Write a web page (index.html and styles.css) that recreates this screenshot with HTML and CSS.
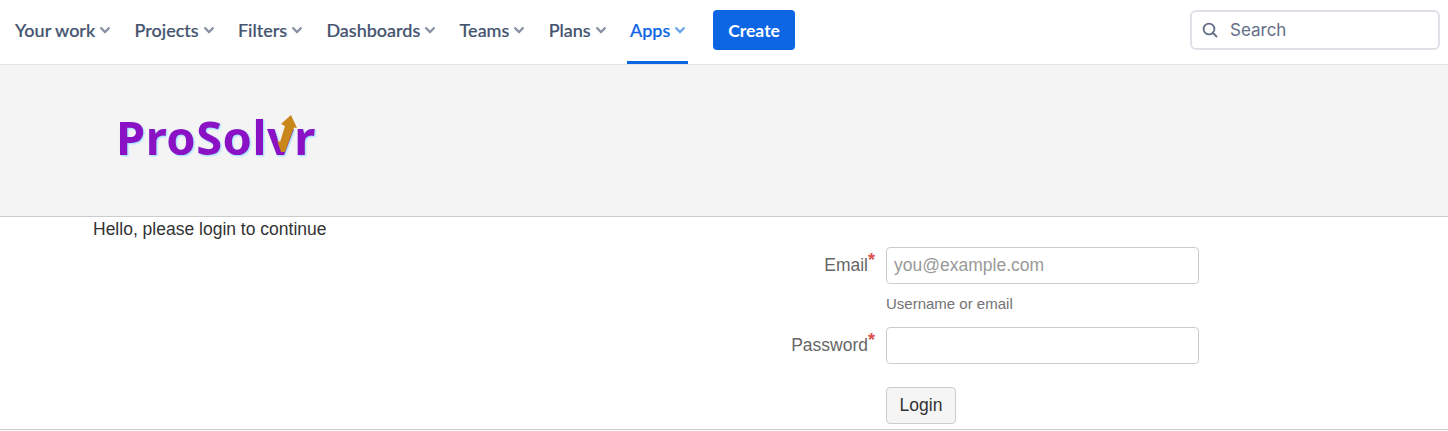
FILE: index.html
```html
<!DOCTYPE html>
<html lang="en">
<head>
    <meta charset="UTF-8">
    <title>Login</title>
    <link rel="stylesheet" href="styles.css">
</head>
<body>
<nav class="topnav">
    <a class="nav-item">Your work<svg class="chev" viewBox="0 0 14 10"><path d="M2.5 2.5 7 7l4.5-4.5"/></svg></a>
    <a class="nav-item">Projects<svg class="chev" viewBox="0 0 14 10"><path d="M2.5 2.5 7 7l4.5-4.5"/></svg></a>
    <a class="nav-item">Filters<svg class="chev" viewBox="0 0 14 10"><path d="M2.5 2.5 7 7l4.5-4.5"/></svg></a>
    <a class="nav-item">Dashboards<svg class="chev" viewBox="0 0 14 10"><path d="M2.5 2.5 7 7l4.5-4.5"/></svg></a>
    <a class="nav-item">Teams<svg class="chev" viewBox="0 0 14 10"><path d="M2.5 2.5 7 7l4.5-4.5"/></svg></a>
    <a class="nav-item">Plans<svg class="chev" viewBox="0 0 14 10"><path d="M2.5 2.5 7 7l4.5-4.5"/></svg></a>
    <a class="nav-item active">Apps<svg class="chev" viewBox="0 0 14 10"><path d="M2.5 2.5 7 7l4.5-4.5"/></svg></a>
    <button class="create">Create</button>
    <div class="search">
        <svg class="search-icon" viewBox="0 0 16 16"><circle cx="7" cy="7" r="5.4"/><path d="M11 11l4 4"/></svg>
        <span>Search</span>
    </div>
</nav>
<header class="banner">
    <div class="logo">
        <span class="logo-text">ProSolvr</span>
        <svg class="logo-arrow" viewBox="0 0 21 40"><path d="M4 10 14 1l6 13-3-.5L8 38H4L0 26l3 2 5-16z"/></svg>
    </div>
</header>
<main class="content">
    <p class="hello">Hello, please login to continue</p>
    <form class="login">
        <label class="field-label">Email<sup>*</sup></label>
        <input class="field" type="text" placeholder="you@example.com">
        <div class="hint">Username or email</div>
        <label class="field-label">Password<sup>*</sup></label>
        <input class="field" type="password">
        <button class="login-btn" type="button">Login</button>
    </form>
</main>
</body>
</html>
```

FILE: styles.css
```css
*{
    box-sizing: border-box;
}
body{
    margin: 0;
    background: #fff;
    font-family: "Liberation Sans", Arial, sans-serif;
}
.topnav{
    height: 65px;
    display: flex;
    align-items: center;
    padding: 0 8px 0 12px;
    border-bottom: 1px solid #dfe1e6;
    font-family: "Lato", sans-serif;
}
.nav-item{
    height: 64px;
    display: flex;
    align-items: center;
    padding: 0 1px 4px 3px;
    margin-right: 18.3px;
    color: #44546f;
    font-size: 18px;
    font-weight: 500;
    -webkit-text-stroke: .2px #44546f;
    position: relative;
}
.chev{
    width: 14px;
    height: 10px;
    margin-left: 3px;
    fill: none;
    stroke: #8993a5;
    stroke-width: 2.4;
}
.nav-item.active{
    color: #0c66e4;
    -webkit-text-stroke: .2px #0c66e4;
}
.nav-item.active .chev{
    stroke: #6ea4ec;
}
.nav-item.active::after{
    content: "";
    position: absolute;
    left: 0;
    right: 0;
    bottom: 0;
    height: 3px;
    background: #0c66e4;
}
.create{
    width: 82px;
    height: 40px;
    margin: 0 0 4px 6.5px;
    border: 0;
    border-radius: 4px;
    background: #0c66e4;
    color: #fff;
    font: 700 17.5px "Lato", sans-serif;
}
.search{
    width: 250px;
    height: 40px;
    margin: 0 0 4px auto;
    display: flex;
    align-items: center;
    gap: 12px;
    padding-left: 10px;
    border: 2px solid #dfe1e6;
    border-radius: 6px;
    color: #626f86;
    font: 17px "Inter", sans-serif;
}
.search-icon{
    width: 16px;
    height: 16px;
    fill: none;
    stroke: #626f86;
    stroke-width: 1.8;
}
.banner{
    height: 152px;
    padding: 42px 0 0 116px;
    background: #f4f4f4;
    border-bottom: 1px solid #ccc;
}
.logo{
    width: 202px;
    position: relative;
}
.logo-text{
    display: block;
    color: #8a12c4;
    font: 700 47px/60px "Noto Sans", sans-serif;
    letter-spacing: .5px;
    text-shadow: 1px 1px 2px #8fd8ff;
    filter: blur(.5px);
}
.logo-arrow{
    position: absolute;
    left: 161px;
    top: 7px;
    width: 21px;
    height: 40px;
    fill: #c9861b;
}
.content{
    height: 213px;
    border-bottom: 1px solid #ccc;
    padding: 0 93px;
}
.hello{
    margin: 0;
    padding-top: 1px;
    color: #333;
    font-size: 17.5px;
    line-height: 23px;
}
.login{
    width: 400px;
    margin: 6px 0 0 706px;
    display: grid;
    grid-template-columns: 76px 313px;
    column-gap: 11px;
    align-items: center;
}
.field-label{
    color: #666;
    font-size: 17.5px;
    text-align: right;
    white-space: nowrap;
    justify-self: end;
}
.field-label sup{
    color: #d9534f;
    font-size: 18px;
    font-weight: 700;
    line-height: 0;
    vertical-align: 5px;
}
.field{
    height: 37px;
    padding: 0 7px;
    border: 1px solid #ccc;
    border-radius: 4px;
    font: 17.5px "Liberation Sans", sans-serif;
}
.field::placeholder{
    color: #999;
}
.hint{
    grid-column: 2;
    height: 43px;
    padding-top: 11px;
    color: #737373;
    font-size: 15px;
}
.login-btn{
    grid-column: 2;
    width: 70px;
    height: 37px;
    margin-top: 23px;
    border: 1px solid #ccc;
    border-radius: 4px;
    background: #f5f5f5;
    color: #333;
    font: 17.5px "Liberation Sans", sans-serif;
}
```
